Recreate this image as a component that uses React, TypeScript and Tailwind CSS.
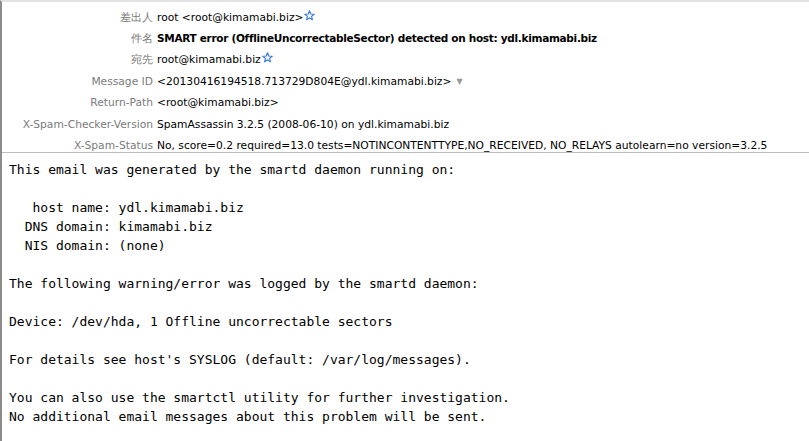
import React from 'react';

const Star = () => (
  <svg width="11" height="11" viewBox="0 0 20 20" className="ml-[1px] -mt-[5px] inline-block">
    <path
      d="M10 1.5 L12.4 7.3 L18.6 7.7 L13.8 11.6 L15.4 17.8 L10 14.4 L4.6 17.8 L6.2 11.6 L1.4 7.7 L7.6 7.3 Z"
      fill="#eef4fd"
      stroke="#3b7ad6"
      strokeWidth="2"
      strokeLinejoin="round"
    />
  </svg>
);

type Row = { label: string; value: React.ReactNode; bold?: boolean };

const rows: Row[] = [
  { label: '差出人', value: <>root &lt;root@kimamabi.biz&gt;<Star /></> },
  {
    label: '件名',
    value: 'SMART error (OfflineUncorrectableSector) detected on host: ydl.kimamabi.biz',
    bold: true,
  },
  { label: '宛先', value: <>root@kimamabi.biz<Star /></> },
  {
    label: 'Message ID',
    value: (
      <>
        &lt;20130416194518.713729D804E@ydl.kimamabi.biz&gt;
        <span className="ml-[5px] text-[8px] text-[#9a9a9a] align-[1px]">▼</span>
      </>
    ),
  },
  { label: 'Return-Path', value: '<root@kimamabi.biz>' },
  { label: 'X-Spam-Checker-Version', value: 'SpamAssassin 3.2.5 (2008-06-10) on ydl.kimamabi.biz' },
  {
    label: 'X-Spam-Status',
    value: 'No, score=0.2 required=13.0 tests=NOTINCONTENTTYPE,NO_RECEIVED, NO_RELAYS autolearn=no version=3.2.5',
  },
];

const body = `This email was generated by the smartd daemon running on:

   host name: ydl.kimamabi.biz
  DNS domain: kimamabi.biz
  NIS domain: (none)

The following warning/error was logged by the smartd daemon:

Device: /dev/hda, 1 Offline uncorrectable sectors

For details see host's SYSLOG (default: /var/log/messages).

You can also use the smartctl utility for further investigation.
No additional email messages about this problem will be sent.`;

export default function App() {
  return (
    <div className="w-[809px] h-[441px] overflow-hidden bg-white border-l-2 border-l-[#8c8c8c] border-t-2 border-t-[#e2e2e2] flex flex-col">
      {/* headers */}
      <div className="h-[151px] shrink-0 overflow-hidden border-b border-[#bdbdbd] pt-[5px] font-['Lucida_Grande','DejaVu_Sans',sans-serif] text-[10.7px]">
        {rows.map((r) => (
          <div key={r.label} className="flex h-[21.4px] items-center whitespace-nowrap">
            <div className="w-[154px] shrink-0 flex justify-end pr-[3px] text-[#7b7b7b]">{r.label}</div>
            <div
              className={
                r.bold
                  ? 'pl-[1px] font-bold text-[10.5px] tracking-[-0.3px] text-black'
                  : 'pl-[1px] text-black'
              }
            >
              {r.value}
            </div>
          </div>
        ))}
      </div>

      {/* message body */}
      <pre className="pl-[7px] pt-[7px] font-['Monaco','DejaVu_Sans_Mono',monospace] text-[13px] leading-[19px] text-black whitespace-pre">
        {body}
      </pre>
    </div>
  );
}
